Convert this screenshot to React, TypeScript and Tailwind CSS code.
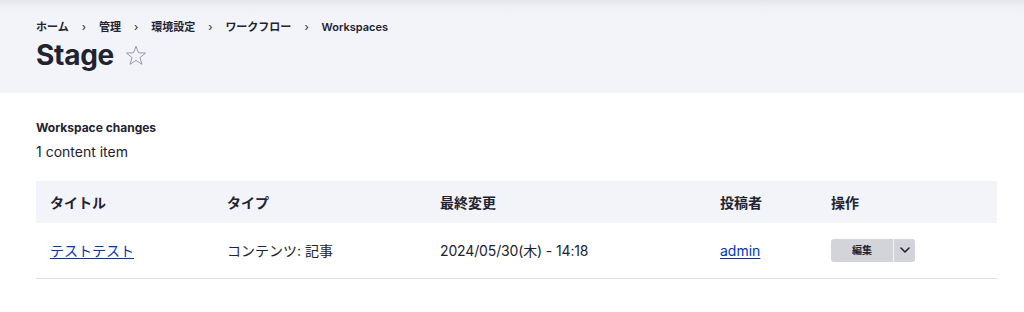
const font = {
  fontFamily: 'Inter, "Noto Sans CJK JP", sans-serif',
};

const crumbs = ["ホーム", "管理", "環境設定", "ワークフロー", "Workspaces"];

function Breadcrumb() {
  return (
    <ol className="flex items-center text-[11px] font-semibold text-[#222330] leading-none">
      {crumbs.map((c, i) => (
        <li key={c} className="flex items-center">
          {i > 0 && <span className="mx-[13px] text-[11px] font-normal">›</span>}
          <span>{c}</span>
        </li>
      ))}
    </ol>
  );
}

function Star() {
  return (
    <svg width="22" height="21" viewBox="0 0 22 21" fill="none" className="ml-[11px]">
      <path
        d="M11 1.2l2.5 6.6 7 .3-5.5 4.4 1.9 6.8L11 15.4l-5.9 3.9 1.9-6.8L1.5 8.1l7-.3z"
        stroke="#8e929c"
        strokeWidth="0.9"
        strokeLinejoin="miter"
      />
    </svg>
  );
}

function ActionButton() {
  return (
    <div className="flex h-[23px] w-[84px] rounded-[3px] bg-[#d3d4d9] text-[#222330]">
      <button className="flex flex-1 items-center justify-center text-[10px] font-bold">編集</button>
      <div className="w-px bg-white/70" />
      <button className="flex w-[21px] items-center justify-center">
        <svg width="10" height="6" viewBox="0 0 10 6" fill="none">
          <path d="M1 1l4 4 4-4" stroke="#222330" strokeWidth="1.6" strokeLinecap="round" strokeLinejoin="round" />
        </svg>
      </button>
    </div>
  );
}

export default function App() {
  return (
    <div className="min-h-[312px] w-[1024px] bg-white text-[#222330]" style={font}>
      <header className="h-[93px] bg-[#f3f4f9] bg-gradient-to-b from-[#e4e5ea] from-0% via-[#f0f1f6] via-[8%] to-[#f3f4f9] to-[20%] px-9 pt-[22px]">
        <Breadcrumb />
        <h1 className="mt-[8px] flex items-center text-[28px] font-bold leading-none tracking-[-0.01em]">
          Stage
          <Star />
        </h1>
      </header>

      <main className="px-9 pt-[28px]">
        <h2 className="text-[12px] font-bold leading-[14px]">Workspace changes</h2>
        <p className="mt-[8px] text-[14px] leading-[18px]">1 content item</p>

        <table className="mt-[20px] w-[961px] border-collapse text-left text-[14px]">
          <thead>
            <tr className="h-[42px] bg-[#f3f4f9]">
              <th className="w-[177px] pl-[14px] font-bold">タイトル</th>
              <th className="w-[213px] pl-[14px] font-bold">タイプ</th>
              <th className="w-[280px] pl-[14px] font-bold">最終変更</th>
              <th className="w-[111px] pl-[14px] font-bold">投稿者</th>
              <th className="pl-[14px] font-bold">操作</th>
            </tr>
          </thead>
          <tbody>
            <tr className="h-[55px] border-b border-[#dedfe4]">
              <td className="pl-[14px]">
                <a href="#" className="text-[#0036b1] underline underline-offset-2">テストテスト</a>
              </td>
              <td className="pl-[14px]">コンテンツ: 記事</td>
              <td className="pl-[14px] tracking-[-0.01em]">2024/05/30(木) - 14:18</td>
              <td className="pl-[14px]">
                <a href="#" className="text-[#0036b1] underline underline-offset-2">admin</a>
              </td>
              <td className="pl-[14px]">
                <ActionButton />
              </td>
            </tr>
          </tbody>
        </table>
      </main>
    </div>
  );
}
